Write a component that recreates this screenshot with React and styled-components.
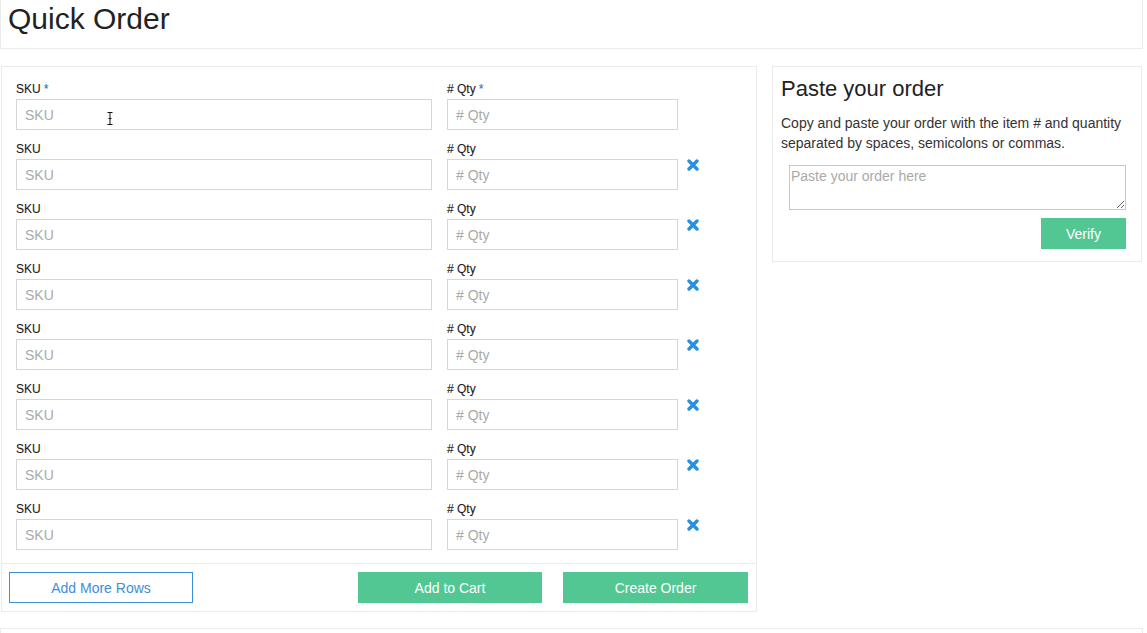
import React from "react";
import styled, { createGlobalStyle } from "styled-components";

const Global = createGlobalStyle`
  html, body { margin: 0; padding: 0; background: #fff; }
  body { font-family: "Liberation Sans", Arial, Helvetica, sans-serif; color: #333; }
  * { box-sizing: border-box; }
`;

const Page = styled.div`
  width: 1147px;
  display: flex;
  flex-direction: column;
`;

const Header = styled.header`
  width: 1143px;
  height: 49px;
  border: 1px solid #ebebeb;
  border-top: none;
  padding: 2px 0 0 7px;
`;

const Title = styled.h1`
  margin: 0;
  font-size: 30px;
  line-height: 33px;
  font-weight: 400;
  color: #222;
`;

const Main = styled.div`
  display: flex;
  align-items: flex-start;
  gap: 15px;
  margin: 17px 0 0 1px;
`;

const Panel = styled.section`
  border: 1px solid #ebebeb;
  background: #fff;
  width: ${(p) => p.$w}px;
`;

const Rows = styled.div`
  padding: 14px 15px 13px 14px;
  display: flex;
  flex-direction: column;
  gap: 11px;
`;

const Row = styled.div`
  display: flex;
  align-items: flex-end;
  gap: 15px;
`;

const Field = styled.div`
  display: flex;
  flex-direction: column;
  gap: 1px;
  width: ${(p) => p.$w}px;
  position: relative;
`;

const Label = styled.label`
  font-size: 12px;
  line-height: 17px;
  color: #1a1a1a;
  -webkit-text-stroke: 0.1px #1a1a1a;
`;

const Req = styled.span`
  color: #2b8fe0;
  margin-left: 3px;
`;

const Input = styled.input`
  height: 31px;
  width: 100%;
  border: 1px solid #d6d6d6;
  padding: 0 8px;
  font-family: inherit;
  font-size: 14px;
  color: #333;
  outline: none;
  &::placeholder { color: #aaa; }
`;

const RemoveBtn = styled.button`
  border: none;
  background: none;
  padding: 0;
  margin: 0 0 19px -6px;
  width: 12px;
  height: 12px;
  display: flex;
  cursor: pointer;
`;

const Cursor = styled.svg`
  position: absolute;
  left: 91px;
  top: 31px;
`;

const Footer = styled.div`
  border-top: 1px solid #ebebeb;
  padding: 8px 8px 8px 7px;
  display: flex;
  align-items: center;
`;

const Spacer = styled.div`
  flex: 1;
`;

const Button = styled.button`
  height: 31px;
  width: ${(p) => p.$w || 184}px;
  margin-left: ${(p) => p.$ml || 0}px;
  font-family: inherit;
  font-size: 14px;
  cursor: pointer;
  border: 1px solid ${(p) => (p.$outline ? "#3d8fd8" : "#52c793")};
  background: ${(p) => (p.$outline ? "#fff" : "#52c793")};
  color: ${(p) => (p.$outline ? "#3d8fd8" : "#fff")};
`;

const Side = styled.div`
  padding: 8px 15px 12px 8px;
  display: flex;
  flex-direction: column;
`;

const SideTitle = styled.h2`
  margin: 0;
  font-size: 22px;
  line-height: 28px;
  font-weight: 400;
  color: #222;
`;

const SideText = styled.p`
  margin: 10px 0 12px;
  font-size: 14px;
  line-height: 20px;
  color: #333;
`;

const Textarea = styled.textarea`
  margin-left: 8px;
  width: 337px;
  height: 45px;
  border: 1px solid #c8c8c8;
  padding: 2px 1px;
  font-family: inherit;
  font-size: 14px;
  outline: none;
  &::placeholder { color: #aaa; }
`;

const SideActions = styled.div`
  display: flex;
  justify-content: flex-end;
  margin-top: 8px;
`;

const BottomBox = styled.div`
  margin-top: 16px;
  width: 1143px;
  height: 20px;
  border: 1px solid #ebebeb;
`;

const XIcon = () => (
  <svg width="12" height="12" viewBox="0 0 12 12">
    <path
      d="M2 2 L10 10 M10 2 L2 10"
      stroke="#2b8fe0"
      strokeWidth="3.4"
      strokeLinecap="round"
    />
  </svg>
);

const rows = Array.from({ length: 8 }, (_, i) => i);

export default function App() {
  return (
    <Page>
      <Global />
      <Header>
        <Title>Quick Order</Title>
      </Header>
      <Main>
        <Panel $w={756}>
          <Rows>
            {rows.map((i) => (
              <Row key={i}>
                <Field $w={416}>
                  <Label>
                    SKU{i === 0 && <Req>*</Req>}
                  </Label>
                  <Input placeholder="SKU" />
                  {i === 0 && (
                    <Cursor width="6" height="13" viewBox="0 0 6 13">
                      <path
                        d="M0.5 0.5 H5.5 M3 0.5 V12.5 M0.5 12.5 H5.5 M1.5 6.5 H4.5"
                        stroke="#111"
                        strokeWidth="1"
                        fill="none"
                      />
                    </Cursor>
                  )}
                </Field>
                <Field $w={231}>
                  <Label>
                    # Qty{i === 0 && <Req>*</Req>}
                  </Label>
                  <Input placeholder="# Qty" />
                </Field>
                {i > 0 && (
                  <RemoveBtn aria-label="Remove row">
                    <XIcon />
                  </RemoveBtn>
                )}
              </Row>
            ))}
          </Rows>
          <Footer>
            <Button $outline>Add More Rows</Button>
            <Spacer />
            <Button>Add to Cart</Button>
            <Button $ml={21} $w={185}>
              Create Order
            </Button>
          </Footer>
        </Panel>
        <Panel $w={370}>
          <Side>
            <SideTitle>Paste your order</SideTitle>
            <SideText>
              Copy and paste your order with the item # and quantity separated
              by spaces, semicolons or commas.
            </SideText>
            <Textarea placeholder="Paste your order here" />
            <SideActions>
              <Button $w={85}>Verify</Button>
            </SideActions>
          </Side>
        </Panel>
      </Main>
      <BottomBox />
    </Page>
  );
}
